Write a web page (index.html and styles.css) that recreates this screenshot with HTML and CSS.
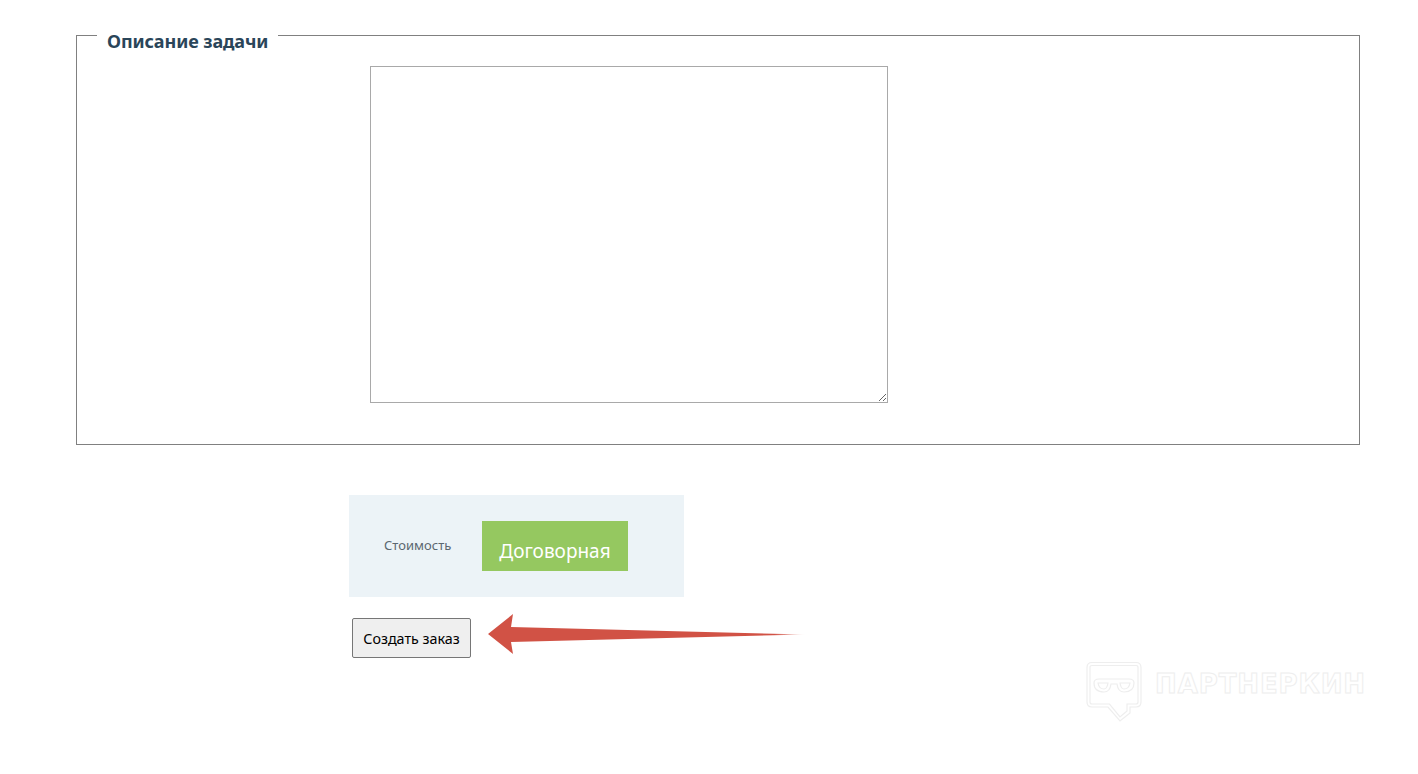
FILE: index.html
```html
<!DOCTYPE html>
<html lang="en">
<head>
    <meta charset="UTF-8">
    <title>Создать заказ</title>
    <link rel="stylesheet" href="styles.css">
</head>
<body>

<div class="page">
    <fieldset class="task-box">
        <legend class="task-title">Описание задачи</legend>
        <textarea class="task-text"></textarea>
    </fieldset>

    <div class="price-box">
        <span class="price-label">Стоимость</span>
        <span class="price-value">Договорная</span>
    </div>

    <button class="submit-button">Создать заказ</button>
</div>

<svg class="arrow" width="320" height="44" viewBox="0 0 320 44">
    <defs>
        <linearGradient id="arrow-fade" x1="0" y1="0" x2="1" y2="0">
            <stop offset="0.9" stop-color="#d15245"/>
            <stop offset="1" stop-color="#d15245" stop-opacity="0"/>
        </linearGradient>
    </defs>
    <path d="M0 20 L25 0 L23 13 L318 20.5 L23 28 L25 40 Z" fill="url(#arrow-fade)"/>
</svg>

<div class="watermark">
    <svg width="58" height="62" viewBox="0 0 58 62" fill="none" stroke="#eeeeee" stroke-width="1.2">
        <path d="M6 1.5 H50 Q55 1.5 55 6.5 V41 Q55 46 50 46 H44 V52 L34 60 L22 46 H6 Q1 46 1 41 V6.5 Q1 1.5 6 1.5 Z"/>
        <path d="M4 6 V41 Q4 43 6 43 H23.5 L34 56 L41 50 V43 H50 Q52 43 52 41 V6.5 Q52 4.5 50 4.5 H6 Q4 4.5 4 6 Z"/>
        <path d="M8 22 Q8 18 13 18 H43 Q48 18 48 22 Q48 31 38 31 Q32 31 31 23 H25 Q24 31 18 31 Q8 31 8 22 Z"/>
        <path d="M12 22 Q13 28 18 28 Q21 28 22 22 Z M34 22 Q35 28 38 28 Q43 28 44 22 Z"/>
    </svg>
    <span class="watermark-text">ПАРТНЕРКИН</span>
</div>

</body>
</html>
```

FILE: styles.css
```css
* {
    box-sizing: border-box;
}

body {
    margin: 0;
    font-family: 'Noto Sans', sans-serif;
    background-color: #ffffff;
    height: 774px;
    overflow: hidden;
    position: relative;
}

.page {
    padding: 17px 58px 0 76px;
}

.task-box {
    margin: 0;
    padding: 13px 0 0 293px;
    height: 428px;
    border: 1px solid #808080;
}

.task-title {
    margin-left: -273px;
    padding: 12px 10px 0;
    font-size: 18px;
    line-height: 24px;
    font-weight: 700;
    letter-spacing: -0.1px;
    color: #2a4559;
}

.task-text {
    display: block;
    width: 518px;
    height: 337px;
    margin: 0;
    border: 1px solid #a9a9a9;
    background-color: #ffffff;
}

.price-box {
    display: flex;
    align-items: center;
    width: 335px;
    height: 102px;
    margin: 50px 0 21px 273px;
    padding-left: 35px;
    background-color: #ecf3f7;
}

.price-label {
    width: 98px;
    margin-bottom: 3px;
    font-size: 13px;
    color: #5b6770;
}

.price-value {
    width: 146px;
    height: 50px;
    padding-top: 17px;
    background-color: #95c860;
    color: #ffffff;
    font-size: 19px;
    line-height: 26px;
    text-align: center;
}

.submit-button {
    display: block;
    width: 119px;
    height: 40px;
    margin-left: 276px;
    padding: 0;
    border: 1px solid #767676;
    border-radius: 2px;
    background-color: #efefef;
    color: #000000;
    font-family: inherit;
    font-size: 14.3px;
}

.arrow {
    position: absolute;
    left: 488px;
    top: 614px;
}

.watermark {
    position: absolute;
    left: 1086px;
    top: 661px;
    display: flex;
    gap: 11px;
}

.watermark-text {
    margin-top: 9px;
    font-family: 'DejaVu Sans', sans-serif;
    font-weight: 700;
    font-size: 26px;
    line-height: 28px;
    letter-spacing: 0.9px;
    color: #ffffff;
    -webkit-text-stroke: 1px #eeeeee;
}
```
